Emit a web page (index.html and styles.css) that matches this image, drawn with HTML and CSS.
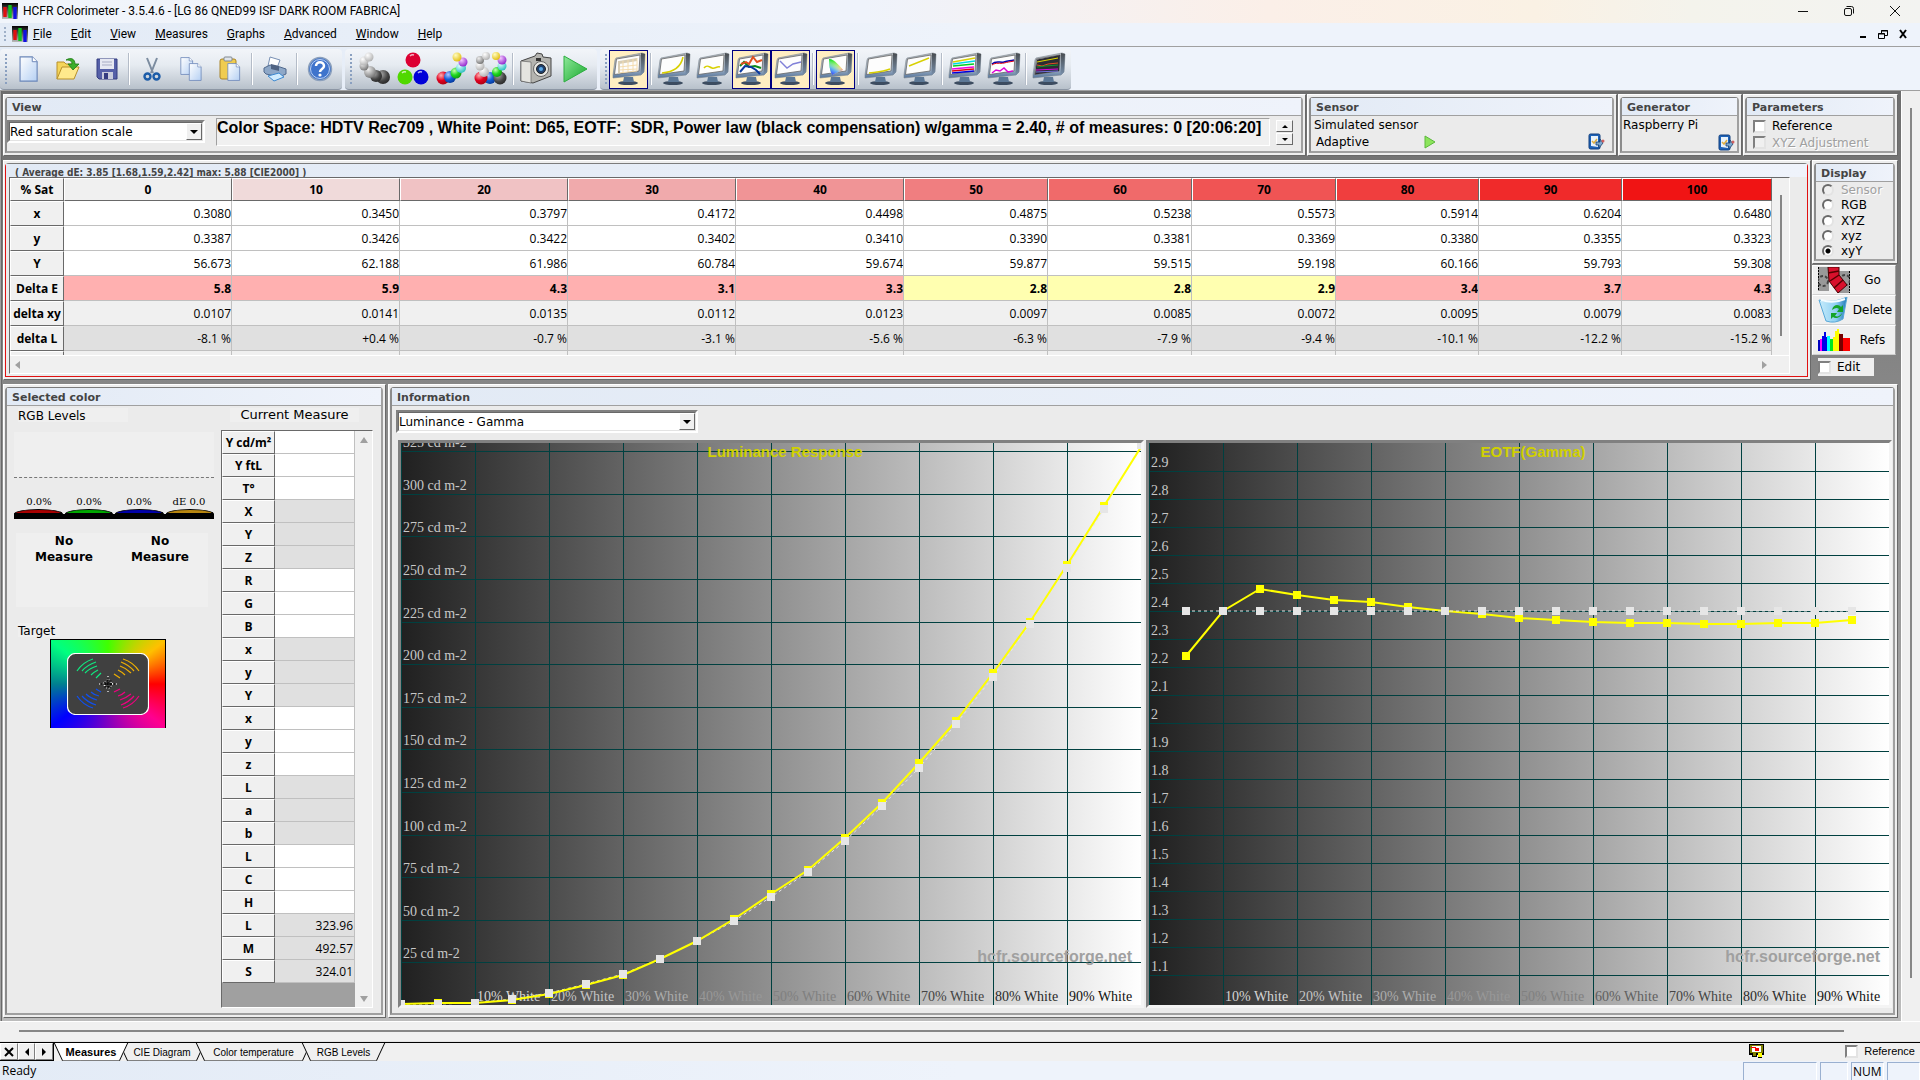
FILE: index.html
```html
<!DOCTYPE html>
<html lang="en">
<head>
  <meta charset="UTF-8">
  <meta name="viewport" content="width=device-width, initial-scale=1.0">
  <title>HCFR Colorimeter</title>
  <link rel="stylesheet" href="styles.css">
</head>
<body>
  <!-- Shared icon parts -->
  <svg class="defs" width="0" height="0" aria-hidden="true">
    <defs>
      <linearGradient id="gBar" x1="0" y1="0" x2="0" y2="1"><stop offset="0" stop-color="#000"/><stop offset="1" stop-color="#bbb"/></linearGradient>
      <linearGradient id="gCase" x1="0" y1="0" x2="0" y2="1"><stop offset="0" stop-color="#b4b8bc"/><stop offset="0.6" stop-color="#a9b8c9"/><stop offset="1" stop-color="#54749c"/></linearGradient>
      <linearGradient id="gSide" x1="0" y1="0" x2="0" y2="1"><stop offset="0" stop-color="#484c50"/><stop offset="1" stop-color="#7890ac"/></linearGradient>
      <linearGradient id="gPage" x1="0" y1="0" x2="1" y2="1"><stop offset="0" stop-color="#fff"/><stop offset="1" stop-color="#b5d0f3"/></linearGradient>
      <linearGradient id="gGo" x1="0" y1="0" x2="1" y2="1"><stop offset="0" stop-color="#8fe89a"/><stop offset="1" stop-color="#16a82c"/></linearGradient>
      <linearGradient id="gBin" x1="0" y1="0" x2="1" y2="0"><stop offset="0" stop-color="#c8ecfb"/><stop offset="0.6" stop-color="#8fd0f2"/><stop offset="1" stop-color="#1f78b8"/></linearGradient>
      <linearGradient id="gHueA" x1="0" y1="0" x2="1" y2="1"><stop offset="0" stop-color="#00e020"/><stop offset="0.45" stop-color="#90f060"/><stop offset="0.7" stop-color="#ffd060"/><stop offset="1" stop-color="#ff1030"/></linearGradient>
      <linearGradient id="gHueB" x1="0" y1="1" x2="0.5" y2="0"><stop offset="0" stop-color="#2020ff"/><stop offset="0.4" stop-color="#60b0ff" stop-opacity="0.9"/><stop offset="0.8" stop-color="#fff" stop-opacity="0"/></linearGradient>
      <radialGradient id="bWhite" cx="0.35" cy="0.3" r="0.8"><stop offset="0" stop-color="#fff"/><stop offset="1" stop-color="#aaa"/></radialGradient>
      <radialGradient id="bGray" cx="0.35" cy="0.3" r="0.8"><stop offset="0" stop-color="#eee"/><stop offset="1" stop-color="#6a6a6a"/></radialGradient>
      <radialGradient id="bDark" cx="0.35" cy="0.3" r="0.8"><stop offset="0" stop-color="#aaa"/><stop offset="0.6" stop-color="#444"/><stop offset="1" stop-color="#222"/></radialGradient>
      <radialGradient id="bRed" cx="0.35" cy="0.3" r="0.8"><stop offset="0" stop-color="#ffb0b0"/><stop offset="0.5" stop-color="#e00020"/><stop offset="1" stop-color="#a00010"/></radialGradient>
      <radialGradient id="bGreen" cx="0.35" cy="0.3" r="0.8"><stop offset="0" stop-color="#c8ffb0"/><stop offset="0.5" stop-color="#20d820"/><stop offset="1" stop-color="#0a900a"/></radialGradient>
      <radialGradient id="bBlue" cx="0.35" cy="0.3" r="0.8"><stop offset="0" stop-color="#b0c8ff"/><stop offset="0.5" stop-color="#1560d8"/><stop offset="1" stop-color="#003090"/></radialGradient>
      <radialGradient id="bCyan" cx="0.35" cy="0.3" r="0.8"><stop offset="0" stop-color="#e0ffff"/><stop offset="1" stop-color="#18b8b8"/></radialGradient>
      <radialGradient id="bPurple" cx="0.35" cy="0.3" r="0.8"><stop offset="0" stop-color="#f4c8ff"/><stop offset="1" stop-color="#8818c8"/></radialGradient>
      <radialGradient id="bYellow" cx="0.35" cy="0.3" r="0.8"><stop offset="0" stop-color="#fffcc0"/><stop offset="1" stop-color="#e0b800"/></radialGradient>
      <symbol id="appicon" viewBox="0 0 16 16">
        <rect width="16" height="16" fill="url(#gBar)"/>
        <path d="M3 4v10" stroke="#e01010" stroke-width="3.4"/>
        <path d="M8 2v13" stroke="#10c020" stroke-width="3.4"/>
        <path d="M13 4v12" stroke="#1010e0" stroke-width="3.4"/>
      </symbol>
      <symbol id="monitor" viewBox="0 0 34 34">
        <ellipse cx="16" cy="31" rx="10" ry="2" fill="#3c4c60"/>
        <path d="M12 25h9l1 5H11z" fill="#5c7896"/>
        <path d="M4 6L30 1L33 2L32 20L29 23L1 26L1 23L3 8z" fill="url(#gCase)" stroke="#7c868f" stroke-width="0.6"/>
        <path d="M29 1L33 2L32 20L28.500 23.500z" fill="url(#gSide)"/>
        <path d="M4.500 7L28 3L27 19L2.500 22.500z" fill="#fdfdfd" stroke="#666" stroke-width="0.800"/>
      </symbol>
      <symbol id="page" viewBox="0 0 24 32">
        <path d="M1 1h15l6 6v24H1z" fill="url(#gPage)" stroke="#6b86b8" stroke-width="1.400"/>
        <path d="M16 1v6h6" fill="#fff" stroke="#6b86b8" stroke-width="1.200"/>
      </symbol>
      <symbol id="config" viewBox="0 0 18 18">
        <rect x="2" y="1" width="11" height="15" rx="1.500" fill="#1c62b8" stroke="#123f7c"/>
        <path d="M4 3h7v11l-7-1z" fill="#e8f2fb"/>
        <path d="M5 8l2 2 3-4" fill="none" stroke="#e0b040" stroke-width="1.500"/>
        <path d="M9 9h4V6l3 4-4 5v-3H9z" fill="#7aa8d0" stroke="#1c3f6c" stroke-width="0.800"/>
        <circle cx="16" cy="8" r="1.500" fill="#d06060"/>
      </symbol>
    </defs>
  </svg>

  <header class="titlebar">
    <svg class="app-icon"><use href="#appicon"/></svg>
    <span class="title-text">HCFR Colorimeter - 3.5.4.6 - [LG 86 QNED99 ISF DARK ROOM FABRICA]</span>
    <div class="window-buttons">
      <button type="button" aria-label="Minimize"><svg width="12" height="12"><path d="M1 6.500h10" stroke="#111"/></svg></button>
      <button type="button" aria-label="Restore"><svg width="12" height="12" fill="none" stroke="#111"><rect x="1.500" y="3.500" width="7" height="7" rx="1.500"/><path d="M3.500 1.500h5a2 2 0 0 1 2 2v5"/></svg></button>
      <button type="button" aria-label="Close"><svg width="12" height="12"><path d="M1 1l10 10M11 1L1 11" stroke="#111"/></svg></button>
    </div>
  </header>

  <nav class="menubar">
    <span class="grip"></span>
    <svg class="app-icon"><use href="#appicon"/></svg>
    <a href="#"><u>F</u>ile</a>
    <a href="#"><u>E</u>dit</a>
    <a href="#"><u>V</u>iew</a>
    <a href="#"><u>M</u>easures</a>
    <a href="#"><u>G</u>raphs</a>
    <a href="#"><u>A</u>dvanced</a>
    <a href="#"><u>W</u>indow</a>
    <a href="#"><u>H</u>elp</a>
    <div class="mdi-buttons">
      <button type="button" aria-label="Minimize document"><svg width="10" height="10"><path d="M2 8h6" stroke="#000" stroke-width="2"/></svg></button>
      <button type="button" aria-label="Restore document"><svg width="10" height="10" fill="none" stroke="#000"><path d="M3.500 4V1.500h6v5H7M3 2h7M0.500 4.500h6v5h-6zM0 5h7"/></svg></button>
      <button type="button" aria-label="Close document"><svg width="10" height="10"><path d="M2 1l6 8M8 1L2 9" stroke="#000" stroke-width="2"/></svg></button>
    </div>
  </nav>

  <div class="toolbars">
    <div class="toolbar">
      <button type="button" class="tool" aria-label="New"><svg width="20" height="26"><use href="#page"/></svg></button>
      <button type="button" class="tool" aria-label="Open">
        <svg width="26" height="26"><path d="M2 23V6h7l2 2h9v4" fill="#f5d55a" stroke="#b8902a"/><path d="M2 23l5-12h17l-5 12z" fill="#ffe98c" stroke="#b8902a"/><path d="M11 4c5-3 9-1 9 4h4l-6 6-5-6h4c0-3-2-4-6-4z" fill="#3cae2c" stroke="#1f7a18" stroke-width="0.800"/></svg>
      </button>
      <button type="button" class="tool" aria-label="Save">
        <svg width="24" height="24"><path d="M2 2h20v20H4l-2-2z" fill="#5560a8" stroke="#343c80"/><path d="M5 2h14v10H5z" fill="#e6e8f2"/><path d="M7 5h10M7 8h10" stroke="#a8acc4"/><path d="M7 15h11v7H7z" fill="#c8ccdc"/><path d="M9 16h4v6H9z" fill="#343c80"/></svg>
      </button>
      <span class="sep"></span>
      <button type="button" class="tool" aria-label="Cut">
        <svg width="24" height="26" fill="none"><path d="M7 2l6 15M17 2l-6 15" stroke="#7c8ca0" stroke-width="2"/><circle cx="7.500" cy="20.500" r="3" stroke="#1c5ca8" stroke-width="2.400"/><circle cx="16.500" cy="20.500" r="3" stroke="#1c5ca8" stroke-width="2.400"/></svg>
      </button>
      <button type="button" class="tool" aria-label="Copy"><svg width="24" height="26"><use href="#page" width="14" height="18" x="1" y="1"/><use href="#page" width="15" height="18" x="9" y="7"/></svg></button>
      <button type="button" class="tool" aria-label="Paste">
        <svg width="24" height="26"><rect x="2" y="3" width="16" height="20" rx="2" fill="#f0cc50" stroke="#a8842a"/><rect x="6" y="1" width="8" height="4" rx="1" fill="#dfe4ea" stroke="#808890"/><use href="#page" width="14" height="18" x="9" y="7"/></svg>
      </button>
      <span class="sep"></span>
      <button type="button" class="tool" aria-label="Print">
        <svg width="26" height="26"><path d="M8 1l10 3-3 8-9-2z" fill="#fff" stroke="#7890b4"/><path d="M2 12l6-3 10 2 6 2v5l-7 3-13-3-2-2z" fill="#8ea8c8" stroke="#50688c"/><path d="M9 8l8 2v5l-8-2z" fill="#506484"/><path d="M6 20l11-3 5 4-10 4z" fill="#d0ecff" stroke="#3c88d0"/></svg>
      </button>
      <span class="sep"></span>
      <button type="button" class="tool" aria-label="Help">
        <svg width="26" height="26"><circle cx="13" cy="13" r="11.500" fill="#3f74cc" stroke="#8ca0bc" stroke-width="1.500"/><circle cx="13" cy="13" r="9.500" fill="none" stroke="#bcd0f0"/><path d="M9 10c0-5 8-5 8 0 0 3-4 3-4 6" fill="none" stroke="#fff" stroke-width="2.500"/><circle cx="13" cy="19" r="1.600" fill="#fff"/></svg>
      </button>
    </div>
    <div class="toolbar">
      <button type="button" class="tool" aria-label="Gray scale">
        <svg width="34" height="34"><circle cx="26" cy="25" r="7" fill="url(#bDark)"/><circle cx="19" cy="24" r="6" fill="url(#bDark)"/><circle cx="13" cy="20" r="6" fill="url(#bGray)"/><circle cx="7" cy="14" r="4.500" fill="url(#bGray)"/><circle cx="7" cy="9" r="4.500" fill="url(#bWhite)"/><circle cx="12" cy="5" r="4.500" fill="url(#bWhite)"/></svg>
      </button>
      <button type="button" class="tool" aria-label="Primaries">
        <svg width="34" height="34"><circle cx="17" cy="8" r="7.500" fill="#dc0032"/><circle cx="9" cy="25" r="7.500" fill="#50d800"/><circle cx="25" cy="25" r="7.500" fill="#0000d8"/><path d="M14 4a4 4 0 0 1 4-1M6 21a4 4 0 0 1 4-1M22 21a4 4 0 0 1 4-1" stroke="#fff" stroke-width="1.500" fill="none" opacity="0.7"/></svg>
      </button>
      <button type="button" class="tool" aria-label="Secondaries">
        <svg width="34" height="34"><circle cx="8" cy="26" r="6.500" fill="url(#bRed)"/><circle cx="15" cy="25" r="6" fill="url(#bBlue)"/><circle cx="21" cy="21" r="5.500" fill="url(#bGreen)"/><circle cx="26" cy="16" r="5" fill="url(#bCyan)"/><circle cx="28" cy="10" r="4.500" fill="url(#bPurple)"/><circle cx="22" cy="5" r="4.500" fill="url(#bYellow)"/></svg>
      </button>
      <button type="button" class="tool" aria-label="All colors">
        <svg width="34" height="34"><circle cx="16" cy="26" r="6" fill="url(#bBlue)"/><circle cx="7" cy="26" r="6.500" fill="url(#bRed)"/><circle cx="26" cy="26" r="6.500" fill="url(#bDark)"/><circle cx="10" cy="20" r="5" fill="url(#bWhite)"/><circle cx="23" cy="20" r="5" fill="url(#bGreen)"/><circle cx="6" cy="14" r="4.500" fill="url(#bWhite)"/><circle cx="28" cy="14" r="4.500" fill="url(#bCyan)"/><circle cx="6" cy="8" r="4" fill="url(#bGray)"/><circle cx="28" cy="8" r="4.500" fill="url(#bPurple)"/><circle cx="12" cy="4" r="4" fill="url(#bWhite)"/><circle cx="22" cy="4" r="4" fill="url(#bYellow)"/></svg>
      </button>
      <span class="sep"></span>
      <button type="button" class="tool" aria-label="Camera">
        <svg width="34" height="34"><path d="M2 9l14-5 2-3 5 1 1 3 8 1v18l-18 7-12-2z" fill="#b4b4b0" stroke="#444"/><path d="M2 9l10 1v21l-10-2z" fill="#e4e4e0" stroke="#666" stroke-width="0.700"/><circle cx="22" cy="17" r="7.500" fill="#e8e8e4" stroke="#666"/><circle cx="22" cy="17" r="4.500" fill="#20406c" stroke="#222"/><circle cx="22" cy="17" r="2" fill="#58a8e8"/><path d="M17 6h5v3h-5z" fill="#333"/></svg>
      </button>
      <button type="button" class="tool" aria-label="Start measures"><svg width="30" height="30"><path d="M4 2l23 13L4 28z" fill="url(#gGo)" stroke="#2cae40"/></svg></button>
    </div>
    <div class="toolbar">
      <button type="button" class="tool active" aria-label="Measures view"><svg width="34" height="34"><use href="#monitor"/><path d="M7 9l18-3v3L7 12z" fill="#d8cdb4"/><path d="M7 15l18-2M7 18l18-1M6 21l19-2M11 9v12M16 8v12M21 7v12M25 6v13" fill="none" stroke="#f4dcae"/><path d="M7 9v12" stroke="#d8cdb4" stroke-width="2"/></svg></button>
      <span class="sep"></span>
      <button type="button" class="tool" aria-label="Luminance"><svg width="34" height="34"><use href="#monitor"/><path d="M5 21c12-1 19-6 21-16" fill="none" stroke="#d8d000" stroke-width="1.500"/></svg></button>
      <button type="button" class="tool" aria-label="Gamma"><svg width="34" height="34"><use href="#monitor"/><path d="M8 16c3-4 5-1 8 0s5-2 8-1" fill="none" stroke="#d8d000" stroke-width="1.500"/></svg></button>
      <button type="button" class="tool active" aria-label="RGB levels"><svg width="34" height="34" fill="none" stroke-width="2"><use href="#monitor"/><path d="M5 14l4-4 5 5 6-1 6 2" stroke="#0a8a1a"/><path d="M5 20l5-6 6 1 5 3 4 4" stroke="#0838a0"/><path d="M6 12l5-2 3 2 4-7 4 5 5-2" stroke="#e05020"/></svg></button>
      <button type="button" class="tool active" aria-label="Color temperature view"><svg width="34" height="34"><use href="#monitor"/><path d="M6 9l7 7 6-4 8-2" fill="none" stroke="#8080d8" stroke-width="1.400"/></svg></button>
      <span class="sep"></span>
      <button type="button" class="tool active" aria-label="CIE diagram view"><svg width="34" height="34"><use href="#monitor"/><path d="M10 7c4-1 11 7 14 11l-11 5c-2-4-3-10-3-16z" fill="url(#gHueA)"/><path d="M10 7c4-1 11 7 14 11l-11 5c-2-4-3-10-3-16z" fill="url(#gHueB)"/></svg></button>
      <span class="sep"></span>
      <button type="button" class="tool" aria-label="Near black"><svg width="34" height="34"><use href="#monitor"/><path d="M5 21c8-1 14-1 21-4" fill="none" stroke="#d8d000" stroke-width="1.500"/></svg></button>
      <button type="button" class="tool" aria-label="Near white"><svg width="34" height="34"><use href="#monitor"/><path d="M6 14l20-8" fill="none" stroke="#d8d000" stroke-width="1.500"/></svg></button>
      <span class="sep"></span>
      <button type="button" class="tool" aria-label="Saturation luminance"><svg width="34" height="34" stroke-width="1.300"><use href="#monitor"/><path d="M5 10l22-4" stroke="#d8d000"/><path d="M5 12l22-3" stroke="#00d8e8"/><path d="M5 14l21-2" stroke="#00d020"/><path d="M4 17l22-2" stroke="#f000e0"/><path d="M4 19l22-2" stroke="#e00010"/><path d="M4 21l22-2" stroke="#0000e0"/></svg></button>
      <button type="button" class="tool" aria-label="Saturation shift"><svg width="34" height="34" fill="none"><use href="#monitor"/><path d="M5 12c4-4 8-1 12-2s5-1 10-2" stroke="#0000b0" stroke-width="1.500"/><path d="M5 13c4-3 8-1 12-2s5-1 10-2" stroke="#e00010"/><path d="M5 21l4-3 4 1 4-3 4 4 5-1" stroke="#e000d8" stroke-width="1.500"/></svg></button>
      <span class="sep"></span>
      <button type="button" class="tool" aria-label="Combined graphs"><svg width="34" height="34" fill="none"><use href="#monitor"/><path d="M5 7.500L28 3L27 19L3 22.500z" fill="#2c2c34"/><path d="M5 10l21-4" stroke="#e0d800"/><path d="M5 13l5 1 6-2 10-1" stroke="#e05020"/><path d="M5 15l8-1 13-1" stroke="#109830"/><path d="M4 18l22-1" stroke="#e000e0"/><path d="M4 20l22-1" stroke="#7070e0"/></svg></button>
    </div>
  </div>

  <div class="workspace">
    <main class="client">
      <div class="row row-top">
        <section class="panel view-panel">
          <div class="panel-inner">
            <h2>View</h2>
            <div class="view-body">
              <div class="combo combo-scale">
                <select aria-label="Scale"><option>Red saturation scale</option></select>
                <span class="combo-arrow"></span>
              </div>
              <div class="info-text">Color Space: HDTV Rec709 , White Point: D65, EOTF:&nbsp; SDR, Power law (black compensation) w/gamma = 2.40, # of measures: 0 [20:06:20]</div>
              <div class="spinner">
                <button type="button" class="up" aria-label="Previous line"></button>
                <button type="button" class="down" aria-label="Next line"></button>
              </div>
            </div>
          </div>
        </section>
        <section class="panel sensor-panel">
          <div class="panel-inner">
            <h2>Sensor</h2>
            <p>Simulated sensor</p>
            <div class="panel-line">
              <span class="mode">Adaptive</span>
              <svg width="14" height="14"><path d="M2 1l10 6-10 6z" fill="#8ce45c" stroke="#5cb83c"/></svg>
              <button type="button" class="config-button" aria-label="Configure sensor"><svg width="18" height="18"><use href="#config"/></svg></button>
            </div>
          </div>
        </section>
        <section class="panel generator-panel">
          <div class="panel-inner">
            <h2>Generator</h2>
            <p>Raspberry Pi</p>
            <div class="panel-line">
              <button type="button" class="config-button" aria-label="Configure generator"><svg width="18" height="18"><use href="#config"/></svg></button>
            </div>
          </div>
        </section>
        <section class="panel params-panel">
          <div class="panel-inner">
            <h2>Parameters</h2>
            <label class="check"><input type="checkbox">Reference</label>
            <label class="check disabled"><input type="checkbox" disabled>XYZ Adjustment</label>
          </div>
        </section>
      </div>

      <div class="row row-middle">
        <section class="panel measures-panel">
          <div class="panel-inner">
            <h2>( Average dE: 3.85 [1.68,1.59,2.42] max: 5.88 [CIE2000] )</h2>
            <div class="measures-frame">
              <div class="grid-box">
                <div class="grid-clip">
                  <table class="grid measures">
                    <colgroup><col class="c-head"><col class="c-wide" span="5"><col class="c-mid" span="3"><col class="c-near" span="2"><col class="c-last"></colgroup>
                    <thead>
                      <tr><th>% Sat</th><th>0</th><th class="s1">10</th><th class="s2">20</th><th class="s3">30</th><th class="s4">40</th><th class="s5">50</th><th class="s6">60</th><th class="s7">70</th><th class="s8">80</th><th class="s9">90</th><th class="s10">100</th></tr>
                    </thead>
                    <tbody>
                      <tr><th>x</th><td>0.3080</td><td>0.3450</td><td>0.3797</td><td>0.4172</td><td>0.4498</td><td>0.4875</td><td>0.5238</td><td>0.5573</td><td>0.5914</td><td>0.6204</td><td>0.6480</td></tr>
                      <tr><th>y</th><td>0.3387</td><td>0.3426</td><td>0.3422</td><td>0.3402</td><td>0.3410</td><td>0.3390</td><td>0.3381</td><td>0.3369</td><td>0.3380</td><td>0.3355</td><td>0.3323</td></tr>
                      <tr><th>Y</th><td>56.673</td><td>62.188</td><td>61.986</td><td>60.784</td><td>59.674</td><td>59.877</td><td>59.515</td><td>59.198</td><td>60.166</td><td>59.793</td><td>59.308</td></tr>
                      <tr class="delta-e"><th>Delta E</th><td>5.8</td><td>5.9</td><td>4.3</td><td>3.1</td><td>3.3</td><td class="ok">2.8</td><td class="ok">2.8</td><td class="ok">2.9</td><td>3.4</td><td>3.7</td><td>4.3</td></tr>
                      <tr class="light"><th>delta xy</th><td>0.0107</td><td>0.0141</td><td>0.0135</td><td>0.0112</td><td>0.0123</td><td>0.0097</td><td>0.0085</td><td>0.0072</td><td>0.0095</td><td>0.0079</td><td>0.0083</td></tr>
                      <tr class="dark"><th>delta L</th><td>-8.1 %</td><td>+0.4 %</td><td>-0.7 %</td><td>-3.1 %</td><td>-5.6 %</td><td>-6.3 %</td><td>-7.9 %</td><td>-9.4 %</td><td>-10.1 %</td><td>-12.2 %</td><td>-15.2 %</td></tr>
                      <tr class="light"><th></th><td></td><td></td><td></td><td></td><td></td><td></td><td></td><td></td><td></td><td></td><td></td></tr>
                    </tbody>
                  </table>
                  <div class="grid-vscroll"><span></span></div>
                </div>
                <div class="grid-hscroll"><span class="tri left"></span><span class="tri right"></span></div>
              </div>
            </div>
          </div>
        </section>
        <aside class="side">
          <section class="panel display-panel">
            <div class="panel-inner">
              <h2>Display</h2>
              <label class="radio disabled"><input type="radio" name="display" disabled>Sensor</label>
              <label class="radio"><input type="radio" name="display">RGB</label>
              <label class="radio"><input type="radio" name="display">XYZ</label>
              <label class="radio"><input type="radio" name="display">xyz</label>
              <label class="radio"><input type="radio" name="display" checked>xyY</label>
            </div>
          </section>
          <div class="side-buttons">
            <button type="button">
              <svg width="32" height="26"><rect width="11" height="24" fill="#999"/><rect x="21" y="4" width="11" height="22" fill="#999"/><path d="M0.500 0v24M31.500 4v22" stroke="#000" stroke-dasharray="2 1"/><circle cx="5" cy="14" r="5" fill="none" stroke="#444" stroke-dasharray="3 2" stroke-width="2"/><circle cx="27" cy="13" r="5" fill="none" stroke="#444" stroke-dasharray="3 2" stroke-width="2"/><path d="M10 0h11v8l8 10-9 8-9-12z" fill="#d8102c" stroke="#400"/><path d="M10 6l11-2M12 14l9-6M16 21l9-8" stroke="#500" stroke-width="1.500"/></svg>
              <span>Go</span>
            </button>
            <button type="button">
              <svg width="32" height="26"><path d="M1 3q14 4 28-3l-4 22q-8 5-17 2z" fill="url(#gBin)" stroke="#58a8d8"/><path d="M3 3q12 4 24-1" fill="none" stroke="#f4fcff" stroke-width="2"/><path d="M14 13c1-6 7-6 9-3l2-2v7h-6l2-3c-2-2-4-1-7 1zM24 16c-1 5-7 6-9 4l-2 2v-6h6l-2 3c3 1 5 0 7-3z" fill="#14a428"/></svg>
              <span>Delete</span>
            </button>
            <button type="button">
              <svg width="32" height="22" shape-rendering="crispEdges"><path d="M0 22V11h2v11z" fill="#0000c0"/><path d="M2 22V10h2v12z" fill="#f0f"/><path d="M4 22V7h2V3h2v5h1v14z" fill="#0000e8"/><path d="M9 22V7h3v15z" fill="#0ff"/><path d="M12 22V10h3v12z" fill="#00e820"/><path d="M15 22V8h2V2h2V0h2v4h1v18z" fill="#ff0"/><path d="M21 22V5h4v17z" fill="#700"/><path d="M25 22V9h7v13z" fill="#f00"/></svg>
              <span>Refs</span>
            </button>
          </div>
          <label class="edit-check"><input type="checkbox">Edit</label>
        </aside>
      </div>

      <div class="row row-bottom">
        <section class="panel selected-panel">
          <div class="panel-inner">
            <h2>Selected color</h2>
            <div class="selected-body">
              <div class="levels">
                <h3>RGB Levels</h3>
                <div class="level-box">
                  <div class="level-values"><span>0.0%</span><span>0.0%</span><span>0.0%</span><span>dE 0.0</span></div>
                  <div class="level-bars"><i class="red"></i><i class="green"></i><i class="blue"></i><i class="gold"></i></div>
                </div>
                <div class="no-measure"><span>No Measure</span><span>No Measure</span></div>
                <h3 class="target-title">Target</h3>
                <div class="target">
                  <svg viewBox="0 0 82 62" width="82" height="62" fill="none" stroke-width="1.200">
                    <rect x="0.500" y="0.500" width="81" height="61" rx="8" fill="#404040" stroke="#fff"/>
                    <g stroke="#10e880"><path d="M10 18Q16 9 26 6M15 18Q20 12 29 9M18 20Q23 15 30 13M24 22Q27 19 31 17M29 25L34 20"/></g>
                    <g stroke="#f0b000"><path d="M72 18Q66 9 56 6M67 18Q62 12 54 9M64 20Q59 15 53 13M58 22Q55 19 51 17M53 25L47 21"/></g>
                    <g stroke="#1050f0"><path d="M10 43Q16 52 26 55M15 43Q20 49 29 52M19 41Q23 45 30 47M24 39Q27 42 32 43M29 36L34 39"/></g>
                    <g stroke="#f00080"><path d="M72 43Q66 52 56 55M67 43Q62 49 54 52M64 41Q59 45 53 47M58 39Q55 42 51 43M53 36L47 39"/></g>
                    <path d="M41 26l5 5-5 5-5-5zM41 24v-1M41 38v1M33 31h-1M49 31h1" stroke="#fff" stroke-dasharray="2 1"/>
                    <path d="M41 25v12M34 31h14M38 28h6v6h-6z" stroke="#000" stroke-dasharray="3 1"/>
                  </svg>
                </div>
              </div>
              <div class="current">
                <h3>Current Measure</h3>
                <div class="current-box">
                  <div class="current-fill">
                    <table class="grid current-table">
                      <colgroup><col class="c-name"><col class="c-value"></colgroup>
                      <tbody>
                        <tr><th>Y cd/m²</th><td></td></tr>
                        <tr><th>Y ftL</th><td></td></tr>
                        <tr><th>T°</th><td></td></tr>
                        <tr class="dark"><th>X</th><td></td></tr>
                        <tr class="dark"><th>Y</th><td></td></tr>
                        <tr class="dark"><th>Z</th><td></td></tr>
                        <tr><th>R</th><td></td></tr>
                        <tr><th>G</th><td></td></tr>
                        <tr><th>B</th><td></td></tr>
                        <tr class="dark"><th>x</th><td></td></tr>
                        <tr class="dark"><th>y</th><td></td></tr>
                        <tr class="dark"><th>Y</th><td></td></tr>
                        <tr><th>x</th><td></td></tr>
                        <tr><th>y</th><td></td></tr>
                        <tr><th>z</th><td></td></tr>
                        <tr class="dark"><th>L</th><td></td></tr>
                        <tr class="dark"><th>a</th><td></td></tr>
                        <tr class="dark"><th>b</th><td></td></tr>
                        <tr><th>L</th><td></td></tr>
                        <tr><th>C</th><td></td></tr>
                        <tr><th>H</th><td></td></tr>
                        <tr class="dark"><th>L</th><td>323.96</td></tr>
                        <tr class="dark"><th>M</th><td>492.57</td></tr>
                        <tr class="dark"><th>S</th><td>324.01</td></tr>
                      </tbody>
                    </table>
                  </div>
                  <div class="current-scroll"><span class="tri up"></span><span class="tri down"></span></div>
                </div>
              </div>
            </div>
          </div>
        </section>

        <section class="panel info-panel">
          <div class="panel-inner">
            <h2>Information</h2>
            <div class="combo combo-info">
              <select aria-label="Information"><option>Luminance - Gamma</option></select>
              <span class="combo-arrow"></span>
            </div>
            <div class="charts">
              <div class="chart"><svg id="luminanceChart" viewBox="0 0 740 562" preserveAspectRatio="xMinYMin slice"></svg></div>
              <div class="chart"><svg id="gammaChart" viewBox="0 0 740 562" preserveAspectRatio="xMinYMin slice"></svg></div>
            </div>
          </div>
        </section>
      </div>
    </main>
    <div class="vscroll"><span></span></div>
  </div>
  <div class="hscroll"><span></span></div>

  <div class="tabbar">
    <div class="tab-nav">
      <button type="button" aria-label="Close tab"><svg width="10" height="10"><path d="M1 1l8 8M9 1L1 9" stroke="#000" stroke-width="2"/></svg></button>
      <button type="button" aria-label="Previous tab"><svg width="10" height="10"><path d="M7 1v8L3 5z"/></svg></button>
      <button type="button" aria-label="Next tab"><svg width="10" height="10"><path d="M3 1v8l4-4z"/></svg></button>
    </div>
    <button type="button" class="tab current-tab"><span>Measures</span></button>
    <button type="button" class="tab tab-cie"><span>CIE Diagram</span></button>
    <button type="button" class="tab tab-temp"><span>Color temperature</span></button>
    <button type="button" class="tab tab-rgb"><span>RGB Levels</span></button>
    <svg class="bug" width="16" height="15" shape-rendering="crispEdges"><path d="M0 0h15v11h-2v3h-4v-3H8v2H3v-2H0z" fill="#000"/><path d="M1 1h13v8H1z" fill="#808000"/><path d="M3 2h9v6H3z" fill="#fff"/><path d="M2 3h5v1H2zM6 4h4v3H6z" fill="#f00"/><path d="M9 9h4v4H9z" fill="#ff0"/><path d="M4 9h3v3H4z" fill="#808000"/></svg>
    <label class="tab-reference"><input type="checkbox">Reference</label>
  </div>

  <footer class="statusbar">
    <span class="ready">Ready</span>
    <span class="pane pane-a"></span>
    <span class="pane pane-b"></span>
    <span class="pane pane-c">NUM</span>
    <span class="pane pane-d"></span>
  </footer>

  <script src="charts.js"></script>
</body>
</html>
```
FILE: styles.css
```css
/* Base */
* {
  box-sizing: border-box;
}

body {
  margin: 0;
  height: 100vh;
  display: flex;
  flex-direction: column;
  overflow: hidden;
  background: #f0f0f0;
  color: #000;
  font-family: "DejaVu Sans", Verdana, sans-serif;
  font-size: 12px;
}

button {
  margin: 0;
  padding: 0;
  border: none;
  background: none;
  color: #000;
  font: inherit;
}

h2, h3, p {
  margin: 0;
  font-size: 12px;
  font-weight: normal;
}

svg {
  display: block;
}

.defs {
  position: absolute;
}

/* Title bar and menu */
.titlebar {
  display: flex;
  align-items: center;
  height: 23px;
  padding: 0 19px 1px 2px;
  background: linear-gradient(90deg, #f1f5fb 0, #eff3fb 45%, #fbefe8 66%, #faf1e4 80%, #f4f3ec 88%, #f3f3f1 100%);
  font-family: Roboto, sans-serif;
  font-size: 12px;
}

.app-icon {
  width: 16px;
  height: 16px;
}

.title-text {
  flex: 1;
  margin-left: 5px;
}

.window-buttons {
  display: flex;
  gap: 34px;
}

.menubar {
  display: flex;
  align-items: center;
  height: 24px;
  padding: 0 12px 1px 4px;
  border-bottom: 1px solid #a0a0a0;
  background: linear-gradient(90deg, #e3ebf6, #eef3fb 50%);
  font-family: Roboto, sans-serif;
  font-size: 12px;
}

.menubar a {
  margin-right: 19px;
  color: #000;
  text-decoration: none;
}

.menubar .app-icon {
  margin: 0 5px 0 6px;
}

.grip {
  height: 14px;
  border-left: 2px dotted #9fb0c8;
}

.mdi-buttons {
  display: flex;
  gap: 10px;
  margin-left: auto;
}

/* Toolbars */
.toolbars {
  display: flex;
  gap: 3px;
  height: 44px;
  padding-top: 2px;
  border-bottom: 1px solid #a0a0a0;
  background: linear-gradient(90deg, #e3ebf6, #eef3fb 50%);
}

.toolbar {
  position: relative;
  display: flex;
  align-items: center;
  padding: 0 3px 0 9px;
  border-bottom: 1px solid #8c96a4;
  border-radius: 4px;
  background: linear-gradient(#f2f5f9, #e6ebf1 40%, #b8c1cb);
}

.toolbar::before {
  content: "";
  position: absolute;
  left: 5px;
  top: 5px;
  bottom: 5px;
  border-left: 2px dotted #8aa0c0;
}

.tool {
  display: flex;
  align-items: center;
  justify-content: center;
  width: 39px;
  height: 39px;
}

.tool.active {
  border: 1px solid #000080;
  background: #ffeec2;
}

.sep {
  width: 6px;
  height: 32px;
  background: linear-gradient(90deg, transparent 2px, #b4bcc8 2px, #b4bcc8 3px, #fff 3px, #fff 4px, transparent 4px);
}

/* Workspace */
.workspace {
  flex: 1;
  min-height: 0;
  display: flex;
  border-left: 1px solid #a0a0a0;
}

.client {
  flex: 1;
  min-width: 0;
  display: flex;
  flex-direction: column;
  gap: 4px;
  padding: 3px 3px 3px 1px;
  border-left: 1px solid #696969;
  background: linear-gradient(#6e6e6e, #bcbcbc);
}

.row {
  display: flex;
  gap: 1px;
}

.row-top {
  height: 62px;
}

.row-middle {
  height: 220px;
}

.row-bottom {
  flex: 1;
  min-height: 0;
  gap: 2px;
}

.vscroll {
  width: 19px;
  padding: 17px 8px 43px;
  border-left: 1px solid #fff;
  background: #f0f0f0;
}

.vscroll span {
  display: block;
  height: 100%;
  border-left: 2px solid #868686;
}

.hscroll {
  height: 21px;
  padding: 8px 76px 0 19px;
  border-top: 1px solid #fff;
  border-bottom: 1px solid #e3e3e3;
}

.hscroll span {
  display: block;
  border-top: 2px solid #868686;
}

/* Panels */
.panel {
  padding: 2px 2px 2px 1px;
  border: 1px solid;
  border-color: #fff #696969 #696969 #fff;
  background: #eee;
}

.panel-inner {
  height: 100%;
  display: flex;
  flex-direction: column;
  border: 2px solid;
  border-color: #7c7c7c #a0a0a0 #a0a0a0 #8c8c8c;
  border-top-width: 1px;
  border-radius: 4px 4px 0 0;
  background: #ebebeb;
}

.panel h2 {
  height: 18px;
  padding-left: 5px;
  border-bottom: 1px solid #a0a0a0;
  background: linear-gradient(90deg, #e2eaf5, #eff3fb);
  color: #444;
  font-size: 11px;
  font-weight: bold;
  line-height: 19px;
  white-space: nowrap;
}

.view-panel {
  flex: 1;
  min-width: 0;
}

.sensor-panel {
  width: 310px;
}

.generator-panel {
  width: 124px;
}

.params-panel {
  width: 155px;
}

.panel p {
  height: 16px;
  padding-left: 3px;
  line-height: 18px;
}

.panel-line {
  display: flex;
  align-items: center;
  padding: 1px 7px 0 5px;
}

.generator-panel p {
  padding-left: 1px;
}

.generator-panel .panel-line {
  padding: 2px 2px 0 0;
}

.sensor-panel .mode {
  width: 107px;
}

.config-button {
  margin-left: auto;
}

.view-body {
  display: flex;
  padding: 2px 8px 0 0;
}

.info-text {
  flex: 1;
  height: 28px;
  margin-left: 11px;
  border: 1px solid;
  border-color: #a0a0a0 #fff #fff #a0a0a0;
  background: #f0f0f0;
  font-family: "Liberation Sans", Arial, sans-serif;
  font-size: 16px;
  font-weight: bold;
  line-height: 18px;
  white-space: nowrap;
  overflow: hidden;
}

.spinner {
  display: flex;
  flex-direction: column;
  gap: 1px;
  margin: 2px 0 0 6px;
}

.spinner button {
  display: flex;
  align-items: center;
  justify-content: center;
  width: 17px;
  height: 12px;
  border: 1px solid;
  border-color: #fff #696969 #696969 #fff;
  background: #f0f0f0;
}

.spinner button::before {
  content: "";
  border: 3px solid transparent;
}

.spinner .up::before {
  border-top: none;
  border-bottom-color: #000;
}

.spinner .down::before {
  border-bottom: none;
  border-top-color: #000;
}

/* Form controls */
.combo {
  position: relative;
  border: 2px solid;
  border-color: #808080 #fff #fff #808080;
  background: #fff;
}

.combo select {
  display: block;
  width: 100%;
  height: 19px;
  padding: 0;
  border: 1px solid;
  border-color: #696969 #e3e3e3 #e3e3e3 #696969;
  border-radius: 0;
  appearance: none;
  background: #fff;
  color: #000;
  font: inherit;
}

.combo-arrow {
  position: absolute;
  top: 1px;
  right: 1px;
  width: 16px;
  height: 17px;
  border: 1px solid;
  border-color: #fff #696969 #696969 #fff;
  background: #f0f0f0;
  pointer-events: none;
}

.combo-arrow::before {
  content: "";
  position: absolute;
  left: 3px;
  top: 6px;
  border: 4px solid transparent;
  border-top-color: #000;
  border-bottom: none;
}

.combo-scale {
  width: 198px;
  height: 23px;
  margin-top: 2px;
}

.combo-info {
  width: 302px;
  margin: 4px 0 0 4px;
}

input {
  flex: none;
  margin: 0;
  appearance: none;
}

input[type="checkbox"] {
  width: 13px;
  height: 13px;
  border: 2px solid;
  border-color: #808080 #e3e3e3 #e3e3e3 #808080;
  background: #fff;
}

input[type="radio"] {
  width: 12px;
  height: 12px;
  border: 2px solid;
  border-color: #696969 #e3e3e3 #e3e3e3 #696969;
  border-radius: 50%;
  background: #fff;
}

input[type="radio"]:checked {
  background: radial-gradient(#000 2px, #fff 3px);
}

input:disabled {
  background: #f0f0f0;
}

.check {
  display: flex;
  align-items: center;
  gap: 6px;
  height: 17px;
  padding-left: 6px;
}

.params-panel h2 {
  margin-bottom: 2px;
}

.disabled {
  color: #a0a0a0;
  text-shadow: 1px 1px #fff;
}

/* Measures table */
.measures-panel {
  flex: 1;
  min-width: 0;
}

.measures-panel .panel-inner {
  border: 1px solid #e01010;
  border-top-color: #7c7c7c;
}

.measures-panel h2 {
  height: 13px;
  padding-left: 9px;
  border-bottom: none;
  font-family: "DejaVu Sans Condensed", "DejaVu Sans", sans-serif;
  font-size: 10px;
  line-height: 17px;
}

.measures-frame {
  flex: 1;
  display: flex;
  padding: 0 17px 2px 3px;
}

.grid-box {
  flex: 1;
  min-width: 0;
  display: flex;
  flex-direction: column;
  border: 1px solid;
  border-color: #696969 #fff #fff #696969;
  background: #f0f0f0;
}

.grid-clip {
  display: flex;
  height: 177px;
  overflow: hidden;
}

.grid {
  table-layout: fixed;
  border-collapse: separate;
  border-spacing: 0;
  font-family: "Open Sans", sans-serif;
  font-size: 12px;
}

.grid th, .grid td {
  padding: 0 1px;
  overflow: hidden;
  white-space: nowrap;
}

.grid th {
  border: 1px solid;
  border-color: #fff #696969 #696969 #fff;
  background: #f0f0f0;
  text-align: center;
}

.grid td {
  border-right: 1px solid #c0c0c0;
  border-bottom: 1px solid #c0c0c0;
  background: #fff;
  text-align: right;
}

.grid.measures td {
  padding-right: 0;
}

.measures {
  width: 1762px;
}

.measures tr {
  height: 25px;
}

.measures thead tr {
  height: 23px;
}

.c-head { width: 54px; }
.c-wide { width: 168px; }
.c-mid { width: 144px; }
.c-near { width: 143px; }
.c-last { width: 150px; }

.grid .s1 { background: #f0dada; }
.grid .s2 { background: #f0c2c4; }
.grid .s3 { background: #f0aaac; }
.grid .s4 { background: #f09496; }
.grid .s5 { background: #f07e80; }
.grid .s6 { background: #f06a6a; }
.grid .s7 { background: #f05454; }
.grid .s8 { background: #f03e3e; }
.grid .s9 { background: #f02a2a; }
.grid .s10 { background: #f01414; }

.grid .delta-e td {
  background: #ffb0b0;
  font-weight: bold;
}

.grid .delta-e td.ok {
  background: #ffffb0;
}

.grid .light td {
  background: #f0f0f0;
}

.grid .dark td {
  background: #e0e0e0;
}

.grid-vscroll {
  padding: 17px 8px 19px;
}

.grid-vscroll span {
  display: block;
  height: 141px;
  border-left: 2px solid #868686;
}

.grid-hscroll {
  flex: 1;
  display: flex;
  align-items: center;
  justify-content: space-between;
  padding: 0 22px 0 5px;
  border-top: 1px solid #fff;
}

.tri {
  border: 4px solid transparent;
}

.tri.left {
  border-left: none;
  border-right: 5px solid #a0a0a0;
}

.tri.right {
  border-right: none;
  border-left: 5px solid #a0a0a0;
}

.tri.up {
  border-top: none;
  border-bottom: 6px solid #a0a0a0;
}

.tri.down {
  border-bottom: none;
  border-top: 6px solid #a0a0a0;
}

/* Display options and action buttons */
.side {
  width: 86px;
}

.display-panel {
  height: 104px;
}

.radio {
  display: flex;
  align-items: center;
  gap: 7px;
  height: 16px;
  padding-left: 6px;
}

.side-buttons {
  padding-top: 1px;
}

.side-buttons button {
  display: flex;
  align-items: center;
  width: 84px;
  height: 30px;
  padding-left: 5px;
  border: 1px solid;
  border-color: #fff #a0a0a0 #d0d0d0 #fff;
  background: #efefef;
}

.side-buttons span {
  flex: 1;
  text-align: center;
}

.edit-check {
  display: flex;
  align-items: center;
  gap: 6px;
  width: 56px;
  height: 18px;
  margin: 3px 0 0 6px;
  background: #efefef;
}

/* Selected color */
.selected-panel {
  width: 383px;
}

.selected-body {
  flex: 1;
  min-height: 0;
  display: flex;
  justify-content: space-between;
  padding: 2px 8px 5px 7px;
}

.levels h3 {
  width: 110px;
  height: 14px;
  margin-left: 4px;
  background: #efefef;
  line-height: 16px;
}

.level-box {
  display: flex;
  flex-direction: column;
  justify-content: flex-end;
  width: 200px;
  height: 87px;
  margin-top: 10px;
  background: linear-gradient(transparent 45px, #ebebeb 45px), #efefef;
}

.level-box::before {
  content: "";
  margin-bottom: 17px;
  border-top: 1px dashed #777;
}

.level-values {
  display: flex;
  color: #000;
  font-family: "DejaVu Serif", serif;
  font-size: 10px;
  line-height: 14px;
}

.level-values span {
  flex: 1;
  text-align: center;
}

.level-bars {
  display: flex;
  gap: 2px;
  height: 10px;
  border-bottom: 5px solid #000;
}

.level-bars i {
  flex: 1;
  border: 1px solid #000;
  border-radius: 50% 50% 0 0 / 100% 100% 0 0;
}

.level-bars .red { background: #a80000; }
.level-bars .green { background: #00a800; }
.level-bars .blue { background: #0000a8; }
.level-bars .gold { background: #b88610; }

.no-measure {
  display: flex;
  width: 192px;
  height: 74px;
  margin: 14px 0 16px 2px;
  background: #efefef;
  font-size: 12px;
  font-weight: bold;
  line-height: 16px;
  text-align: center;
}

.no-measure span {
  flex: 1;
  padding: 0 16px;
}

.levels .target-title {
  width: 42px;
}

.target {
  display: flex;
  align-items: center;
  justify-content: center;
  width: 116px;
  height: 89px;
  margin: 2px 0 0 36px;
  border: 1px solid #000;
  border-bottom: none;
  background: conic-gradient(from 53deg, #ffc000, #ff0000 37deg, #ff0090 74deg, #8000c0 127deg, #0000ff 180deg, #008090 217deg, #00ff80 254deg, #40ff00 307deg, #ffc000);
}

.current {
  display: flex;
  flex-direction: column;
  width: 152px;
}

.current h3 {
  height: 14px;
  margin: 0 14px 8px 9px;
  background: #efefef;
  font-size: 13px;
  line-height: 14px;
  text-align: center;
  white-space: nowrap;
}

.current-box {
  flex: 1;
  min-height: 0;
  display: flex;
  overflow: hidden;
  border: 1px solid;
  border-color: #696969 #fff #fff #696969;
  background: #f0f0f0;
}

.current-fill {
  flex: 1;
  background: #a0a0a0;
}

.current-table {
  width: 133px;
}

.current-table tr {
  height: 23px;
}

.c-name { width: 53px; }
.c-value { width: 80px; }

.current-scroll {
  display: flex;
  flex-direction: column;
  align-items: center;
  justify-content: space-between;
  width: 17px;
  padding: 6px 0 5px;
}

/* Charts */
.info-panel {
  flex: 1;
  min-width: 0;
}

.charts {
  flex: 1;
  min-height: 0;
  display: flex;
  gap: 2px;
  padding: 7px 1px 5px 6px;
}

.chart {
  flex: 1;
  min-width: 0;
  border: 3px solid;
  border-color: #808080 #f4f4f4 #f4f4f4 #808080;
  background: linear-gradient(90deg, #202020, #fff);
}

.chart svg {
  width: 100%;
  height: 100%;
}

.chart .gridline {
  stroke: #004040;
  shape-rendering: crispEdges;
}

.chart .caption {
  fill: #d0d000;
  font: bold 15px "Liberation Sans", Arial, sans-serif;
  text-anchor: middle;
}

.chart .watermark {
  fill: #a0a0a0;
  font: bold 16px "Liberation Sans", Arial, sans-serif;
  text-anchor: end;
}

.chart .axis {
  fill: #c8c8c8;
  font: 14px "Liberation Serif", "Times New Roman", serif;
}

.chart .reference {
  fill: none;
  stroke: #e6e6e6;
  stroke-dasharray: 3 3;
}

.chart .measured {
  fill: none;
  stroke: #ff0;
  stroke-width: 2;
}

.chart .mark-reference {
  fill: #e6e6e6;
}

.chart .mark-measured {
  fill: #ff0;
}

/* Tabs and status bar */
.tabbar {
  display: flex;
  height: 19px;
  padding-right: 5px;
  border-top: 1px solid #000;
  font-family: "Liberation Sans", Arial, sans-serif;
  font-size: 11px;
}

.tab-nav {
  display: flex;
  width: 54px;
  border-right: 1px solid #000;
  border-bottom: 1px solid #000;
}

.tab-nav button {
  flex: 1;
  display: flex;
  align-items: center;
  justify-content: center;
  border: 1px solid;
  border-color: #fff #808080 #808080 #fff;
}

.tab {
  position: relative;
  height: 18px;
  margin-left: -9px;
  font-size: 10px;
}

.tab::before, .tab::after {
  content: "";
  position: absolute;
  top: 0;
  bottom: 0;
  background: #f0f0f0;
  border-bottom: 1px solid #808080;
}

.tab::before {
  left: 4px;
  right: 40%;
  border-left: 1px solid #000;
  transform: skewX(25deg);
}

.tab::after {
  left: 40%;
  right: 4px;
  border-right: 1px solid #000;
  transform: skewX(-25deg);
}

.tab span {
  position: relative;
  z-index: 1;
}

.tab.current-tab {
  z-index: 2;
  width: 74px;
  margin-left: 0;
  font-size: 11px;
  font-weight: bold;
}

.current-tab::before, .current-tab::after {
  background: #fff;
}

.tab-cie { width: 86px; }
.tab-temp { width: 115px; }
.tab-rgb { width: 83px; }

.bug {
  margin: 1px 80px 0 auto;
}

.tab-reference {
  display: flex;
  align-items: center;
  gap: 6px;
  padding-bottom: 2px;
}

.statusbar {
  display: flex;
  gap: 3px;
  height: 19px;
  padding-top: 1px;
  background: linear-gradient(90deg, #e3ebf6, #eef3fb 50%);
  font-family: "Open Sans", sans-serif;
  font-size: 12px;
  line-height: 18px;
}

.ready {
  flex: 1;
  padding-left: 2px;
}

.pane {
  padding-left: 1px;
  border: 1px solid #9ab0d0;
  border-right-color: #fff;
  border-bottom: none;
}

.pane-a { width: 74px; }
.pane-b { width: 28px; }
.pane-c { width: 33px; }
.pane-d { width: 33px; }
```
FILE: charts.js
```javascript
const SVG_NS = 'http://www.w3.org/2000/svg';
const WIDTH = 740;
const HEIGHT = 562;
const COLUMN = 74;
const whiteLabelColors = ['#d4d4d4', '#c4c4c4', '#acacac', '#989898', '#808080', '#606060', '#444', '#2a2a2a', '#111'];

function add(svg, name, attributes, text) {
  const node = document.createElementNS(SVG_NS, name);
  for (const key in attributes) {
    node.setAttribute(key, attributes[key]);
  }
  if (text) {
    node.textContent = text;
  }
  svg.appendChild(node);
}

// Texts, grid and axis labels shared by both charts
function drawBase(svg, title, rows) {
  for (let i = 0; i < 10; i++) {
    add(svg, 'line', { class: 'gridline', x1: i * COLUMN + 0.5, x2: i * COLUMN + 0.5, y1: 0, y2: HEIGHT });
    if (i > 0) {
      add(svg, 'text', { class: 'axis', x: i * COLUMN + 2, y: 558, style: 'fill:' + whiteLabelColors[i - 1] }, i * 10 + '% White');
    }
  }

  rows.forEach(row => {
    add(svg, 'line', { class: 'gridline', x1: 0, x2: WIDTH, y1: row.y + 0.5, y2: row.y + 0.5 });
    add(svg, 'text', { class: 'axis', x: 2, y: row.y - 4 }, row.label);
  });

  add(svg, 'text', { class: 'caption', x: 384, y: 14 }, title);
  add(svg, 'text', { class: 'watermark', x: 731, y: 519 }, 'hcfr.sourceforge.net');
}

function drawSeries(svg, points, kind) {
  add(svg, 'polyline', { class: kind, points: points.map(p => p.join(',')).join(' ') });
}

function drawMarks(svg, points, kind) {
  points.forEach(p => add(svg, 'rect', { class: 'mark-' + kind, x: p[0] - 4, y: p[1] - 4, width: 8, height: 8 }));
}

function toPoints(values, firstX) {
  return values.map((y, i) => [firstX + i * COLUMN / 2, y]);
}

// Luminance
const luminance = document.getElementById('luminanceChart');
const luminanceRows = [];
for (let i = 1; i <= 13; i++) {
  luminanceRows.push({ y: Math.round(562 - i * 42.6), label: i * 25 + ' cd m-2' });
}
const lumReference = toPoints([561, 561, 560, 556, 550, 541, 531, 516, 498, 478, 454, 429, 398, 363, 325, 281, 234, 181, 125, 66, 2], 0);
const lumMeasured = toPoints([561, 560, 560, 557, 551, 542, 532, 516, 498, 476, 451, 427, 395, 360, 320, 278, 230, 179, 122, 63, 4], 0);
drawBase(luminance, 'Luminance Response', luminanceRows);
drawSeries(luminance, lumReference, 'reference');
drawSeries(luminance, lumMeasured, 'measured');
drawMarks(luminance, lumMeasured.slice(1, 20), 'measured');
drawMarks(luminance, lumReference, 'reference');

// Gamma
const gamma = document.getElementById('gammaChart');
const gammaRows = [];
for (let i = 0; i < 19; i++) {
  gammaRows.push({ y: 28 + i * 28, label: String((29 - i) / 10) });
}
const gammaReference = toPoints(new Array(19).fill(168), 37);
const gammaMeasured = toPoints([213, 168, 146, 152, 157, 159, 164, 168, 171, 175, 177, 179, 180, 180, 181, 181, 180, 180, 177], 37);
drawBase(gamma, 'EOTF(Gamma)', gammaRows);
drawSeries(gamma, gammaMeasured, 'measured');
drawMarks(gamma, gammaMeasured, 'measured');
drawSeries(gamma, gammaReference, 'reference');
drawMarks(gamma, gammaReference, 'reference');
```
